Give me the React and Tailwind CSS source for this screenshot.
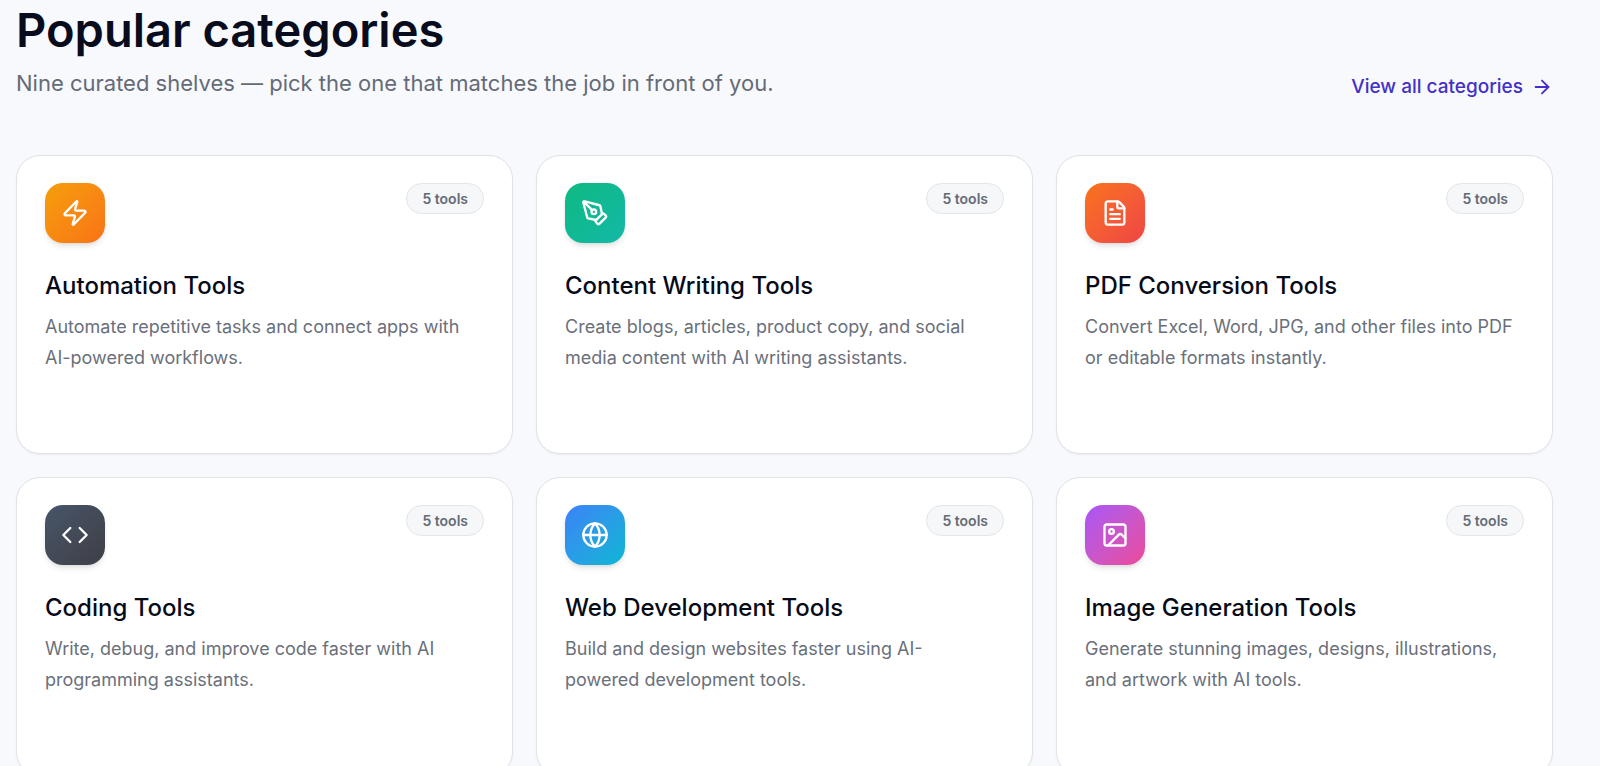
import { ArrowRight, Code, FileText, Globe, Image, PenTool, Zap } from 'lucide-react'

const CATEGORIES = [
  {
    name: 'Automation Tools',
    blurb: 'Automate repetitive tasks and connect apps with AI-powered workflows.',
    icon: Zap,
    tile: 'from-[#f59e0b] to-[#f97316]',
    count: 5,
  },
  {
    name: 'Content Writing Tools',
    blurb: 'Create blogs, articles, product copy, and social media content with AI writing assistants.',
    icon: PenTool,
    tile: 'from-[#10b981] to-[#14b8a6]',
    count: 5,
  },
  {
    name: 'PDF Conversion Tools',
    blurb: 'Convert Excel, Word, JPG, and other files into PDF or editable formats instantly.',
    icon: FileText,
    tile: 'from-[#f97316] to-[#ef4444]',
    count: 5,
  },
  {
    name: 'Coding Tools',
    blurb: 'Write, debug, and improve code faster with AI programming assistants.',
    icon: Code,
    tile: 'from-[#475569] to-[#3f3f46]',
    count: 5,
  },
  {
    name: 'Web Development Tools',
    blurb: 'Build and design websites faster using AI-\npowered development tools.',
    icon: Globe,
    tile: 'from-[#3b82f6] to-[#06b6d4]',
    count: 5,
  },
  {
    name: 'Image Generation Tools',
    blurb: 'Generate stunning images, designs, illustrations, and artwork with AI tools.',
    icon: Image,
    tile: 'from-[#a855f7] to-[#ec4899]',
    count: 5,
  },
]

function CategoryCard({ category }) {
  const Icon = category.icon

  return (
    <a
      href="#"
      className="block rounded-3xl border border-[#e0e3e8] bg-white px-7 pt-[27px] pb-20 shadow-xs"
    >
      {/* Icon tile + tool count */}
      <div className="flex items-start justify-between mb-[26px]">
        <span className={`flex size-15 items-center justify-center rounded-[18px] bg-linear-to-br text-white shadow-md ${category.tile}`}>
          <Icon size={28} strokeWidth={2} />
        </span>
        <span className="rounded-full border border-[#e2e5e9] bg-[#f5f7f9] px-[15px] py-1 text-[14px] leading-[21px] font-semibold text-[#646b76]">
          {category.count} tools
        </span>
      </div>

      <h3 className="mb-2 text-[24px] leading-[34px] font-medium text-[#070a17]">
        {category.name}
      </h3>
      <p className="whitespace-pre-line text-[18px] leading-[31px] text-[#6a707b]">
        {category.blurb}
      </p>
    </a>
  )
}

export default function App() {
  return (
    <main className="h-screen overflow-hidden bg-[#f8f9fd] pl-4 pr-[47px] font-['Inter',sans-serif]">
      <div className="flex items-end justify-between mb-14">
        <div>
          <h2 className="text-[47px] leading-[60px] font-semibold text-[#080c1c]">
            Popular categories
          </h2>
          <p className="mt-[7px] text-[22px] leading-[32px] text-[#646b76]">
            Nine curated shelves — pick the one that matches the job in front of you.
          </p>
        </div>
        <a href="#" className="flex items-center gap-2 text-[19px] leading-[24px] font-medium text-[#4330c6]">
          View all categories
          <ArrowRight size={22} strokeWidth={2} />
        </a>
      </div>

      <div className="grid grid-cols-3 gap-[23px]">
        {CATEGORIES.map((category) => (
          <CategoryCard key={category.name} category={category} />
        ))}
      </div>
    </main>
  )
}
